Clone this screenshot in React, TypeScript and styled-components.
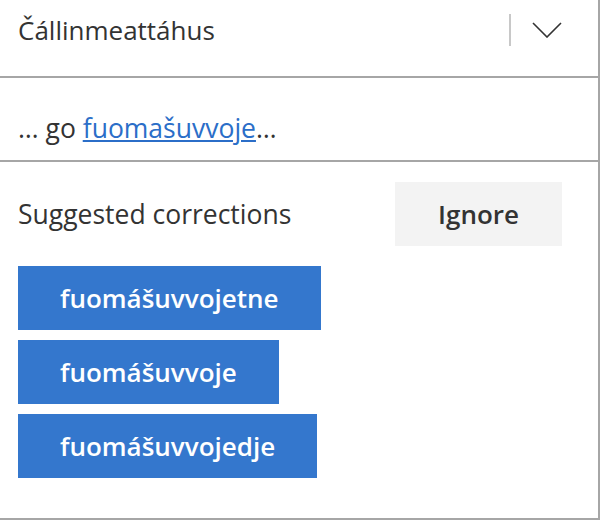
import styled, { createGlobalStyle } from 'styled-components';

const Global = createGlobalStyle`
  body {
    margin: 0;
    background: #fff;
    font-family: "Open Sans", "Noto Sans", sans-serif;
    color: #333;
  }
`;

const Pane = styled.div`
  width: 600px;
  height: 520px;
  box-sizing: border-box;
  border-right: 2px solid #a6a6a6;
  border-bottom: 2px solid #a6a6a6;
  display: flex;
  flex-direction: column;
`;

const Header = styled.div`
  height: 78px;
  box-sizing: border-box;
  padding: 0 36px 16px 18px;
  display: flex;
  align-items: center;
  border-bottom: 2px solid #a6a6a6;
`;

const Title = styled.span`
  flex: 1;
  font-size: 26px;
  color: #333;
`;

const Separator = styled.span`
  width: 2px;
  height: 32px;
  background: #c8c8c8;
  margin-right: 21px;
`;

const Context = styled.div`
  height: 84px;
  box-sizing: border-box;
  padding: 32px 18px 0;
  font-size: 26.5px;
  line-height: 36px;
  border-bottom: 2px solid #a6a6a6;
`;

const Link = styled.a`
  color: #2b6ec8;
  text-decoration: underline;
`;

const Suggestions = styled.div`
  padding: 20px 36px 0 18px;
`;

const TopRow = styled.div`
  display: flex;
  align-items: center;
  justify-content: space-between;
  margin-bottom: 20px;
`;

const Label = styled.span`
  font-size: 26.5px;
`;

const IgnoreButton = styled.button`
  height: 64px;
  width: 167px;
  border: none;
  background: #f3f3f3;
  color: #333;
  font-family: inherit;
  font-size: 26px;
  font-weight: 600;
`;

const List = styled.div`
  display: flex;
  flex-direction: column;
  align-items: flex-start;
  gap: 10px;
`;

const Fix = styled.button`
  height: 64px;
  padding: 0 42px;
  border: none;
  background: #3477cd;
  color: #fff;
  font-family: inherit;
  font-size: 26px;
  font-weight: 600;
`;

const Chevron = () => (
  <svg width="30" height="16" viewBox="0 0 30 16">
    <polyline points="1,1 15,15 29,1" fill="none" stroke="#333" strokeWidth="1.6" />
  </svg>
);

const App = () => (
  <>
    <Global />
    <Pane>
      <Header>
        <Title>Čállinmeattáhus</Title>
        <Separator />
        <Chevron />
      </Header>
      <Context>
        … go <Link href="#">fuomašuvvoje</Link>…
      </Context>
      <Suggestions>
        <TopRow>
          <Label>Suggested corrections</Label>
          <IgnoreButton>Ignore</IgnoreButton>
        </TopRow>
        <List>
          <Fix>fuomášuvvojetne</Fix>
          <Fix>fuomášuvvoje</Fix>
          <Fix>fuomášuvvojedje</Fix>
        </List>
      </Suggestions>
    </Pane>
  </>
);

export default App;
